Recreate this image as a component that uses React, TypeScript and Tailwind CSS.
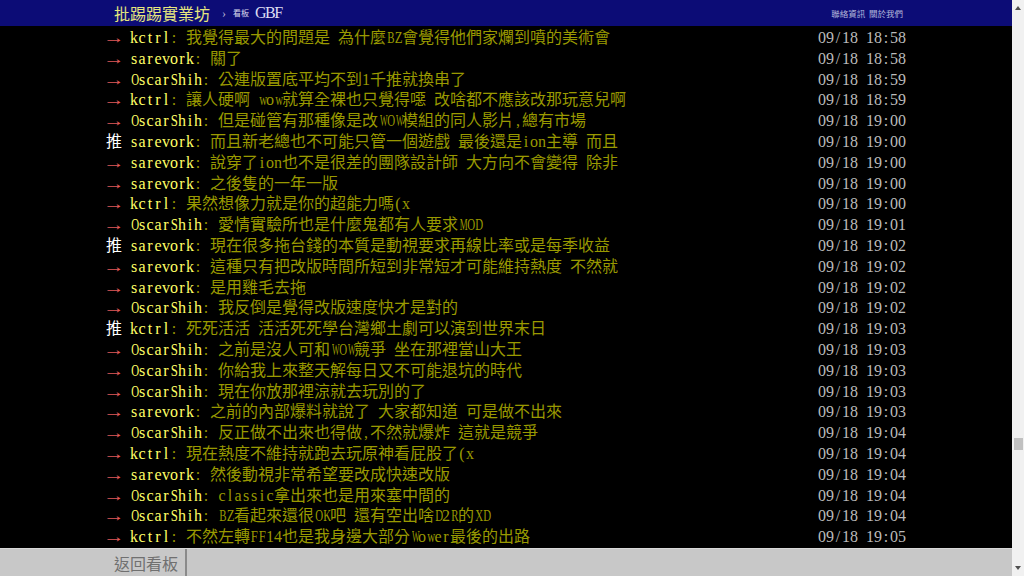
import React from 'react';

type Push = { tag: '推' | '→'; user: string; text: string; time: string };

const pushes: Push[] = [
    { tag: '→', user: 'kctrl', text: '我覺得最大的問題是 為什麼BZ會覺得他們家爛到噴的美術會', time: '09/18 18:58' },
    { tag: '→', user: 'sarevork', text: '關了', time: '09/18 18:58' },
    { tag: '→', user: 'OscarShih', text: '公連版置底平均不到1千推就換串了', time: '09/18 18:59' },
    { tag: '→', user: 'kctrl', text: '讓人硬啊 wow就算全裸也只覺得噁 改啥都不應該改那玩意兒啊', time: '09/18 18:59' },
    { tag: '→', user: 'OscarShih', text: '但是碰管有那種像是改WOW模組的同人影片,總有市場', time: '09/18 19:00' },
    { tag: '推', user: 'sarevork', text: '而且新老總也不可能只管一個遊戲 最後還是ion主導 而且', time: '09/18 19:00' },
    { tag: '→', user: 'sarevork', text: '說穿了ion也不是很差的團隊設計師 大方向不會變得 除非', time: '09/18 19:00' },
    { tag: '→', user: 'sarevork', text: '之後隻的一年一版', time: '09/18 19:00' },
    { tag: '→', user: 'kctrl', text: '果然想像力就是你的超能力嗎(x', time: '09/18 19:00' },
    { tag: '→', user: 'OscarShih', text: '愛情實驗所也是什麼鬼都有人要求MOD', time: '09/18 19:01' },
    { tag: '推', user: 'sarevork', text: '現在很多拖台錢的本質是動視要求再線比率或是每季收益', time: '09/18 19:02' },
    { tag: '→', user: 'sarevork', text: '這種只有把改版時間所短到非常短才可能維持熱度 不然就', time: '09/18 19:02' },
    { tag: '→', user: 'sarevork', text: '是用雞毛去拖', time: '09/18 19:02' },
    { tag: '→', user: 'OscarShih', text: '我反倒是覺得改版速度快才是對的', time: '09/18 19:02' },
    { tag: '推', user: 'kctrl', text: '死死活活 活活死死學台灣鄉土劇可以演到世界末日', time: '09/18 19:03' },
    { tag: '→', user: 'OscarShih', text: '之前是沒人可和WOW競爭 坐在那裡當山大王', time: '09/18 19:03' },
    { tag: '→', user: 'OscarShih', text: '你給我上來整天解每日又不可能退坑的時代', time: '09/18 19:03' },
    { tag: '→', user: 'OscarShih', text: '現在你放那裡涼就去玩別的了', time: '09/18 19:03' },
    { tag: '→', user: 'sarevork', text: '之前的內部爆料就說了 大家都知道 可是做不出來', time: '09/18 19:03' },
    { tag: '→', user: 'OscarShih', text: '反正做不出來也得做,不然就爆炸 這就是競爭', time: '09/18 19:04' },
    { tag: '→', user: 'kctrl', text: '現在熱度不維持就跑去玩原神看屁股了(x', time: '09/18 19:04' },
    { tag: '→', user: 'sarevork', text: '然後動視非常希望要改成快速改版', time: '09/18 19:04' },
    { tag: '→', user: 'OscarShih', text: 'classic拿出來也是用來塞中間的', time: '09/18 19:04' },
    { tag: '→', user: 'OscarShih', text: 'BZ看起來還很OK吧 還有空出啥D2R的XD', time: '09/18 19:04' },
    { tag: '→', user: 'kctrl', text: '不然左轉FF14也是我身邊大部分Wower最後的出路', time: '09/18 19:05' },
];

// half width latin squeezed into 8px cells, like the bbs terminal font
const squeeze = (ch: string) => {
    if (ch === 'W') return 'scale-x-[0.5]';
    if (ch === 'M') return 'scale-x-[0.55]';
    if (ch === 'm') return 'scale-x-[0.6]';
    if ('ABCDGHKNOQRUVXYw'.includes(ch)) return 'scale-x-[0.68]';
    if ('EFLPSTZ'.includes(ch)) return 'scale-x-[0.8]';
    return '';
};

const Term = ({ text }: { text: string }) => {
    const out: React.ReactNode[] = [];
    let buf = '';
    Array.from(text).forEach((ch, i) => {
        if (ch.charCodeAt(0) < 128) {
            if (buf) { out.push(<span key={'c' + i}>{buf}</span>); buf = ''; }
            out.push(<span key={i} className={`inline-block w-[8px] text-center ${squeeze(ch)}`}>{ch}</span>);
        } else {
            buf += ch;
        }
    });
    if (buf) out.push(<span key="end">{buf}</span>);
    return <>{out}</>;
};

const PushRow = ({ p }: { p: Push }) => (
    <div className="flex h-[20.8px] leading-[20.8px] whitespace-pre">
        <span className="w-[24px] shrink-0">
            {p.tag === '推'
                ? <span className="text-white">推</span>
                : <span className="inline-block w-[16px] scale-x-[1.35] text-center text-[#e05a5a]">→</span>}
        </span>
        <span className="text-[#ffff66]"><Term text={p.user} /></span>
        <span className="text-[#999900]"><Term text={': ' + p.text} /></span>
        <span className="ml-auto text-[#bbbbbb]"><Term text={p.time} /></span>
    </div>
);

export default function App() {
    return (
        <div className="flex h-[576px] w-[1024px] overflow-hidden bg-black font-['Liberation_Serif','Noto_Sans_CJK_TC',serif]">
            <div className="flex w-[1012px] flex-col">
                {/* top bar */}
                <div className="h-[26px] shrink-0 bg-[#0c0c76]">
                    <div className="mx-auto flex h-full w-[800px] items-center pl-2 pr-[3px]">
                        <span className="text-[16px] text-[#e6e67e] font-['Noto_Sans_CJK_TC',sans-serif]">批踢踢實業坊</span>
                        <span className="ml-[12px] text-[12px] text-[#b8b8d8]">›</span>
                        <span className="ml-[7px] text-[8px] text-[#d8d8ea] font-['Noto_Sans_CJK_TC',sans-serif]">看板</span>
                        <span className="ml-[6px] text-[16px] tracking-[-1.5px] text-[#dcdcf2]">GBF</span>
                        <span className="ml-auto text-[8.5px] text-[#b4b8dc] font-['Noto_Sans_CJK_TC',sans-serif] whitespace-pre">聯絡資訊  關於我們</span>
                    </div>
                </div>

                {/* pushes */}
                <div className="flex-1 overflow-hidden pt-[2px]">
                    <div className="mx-auto w-[800px] text-[16px]">
                        {pushes.map((p, i) => <PushRow key={i} p={p} />)}
                    </div>
                </div>

                {/* bottom nav */}
                <div className="h-[28px] shrink-0 border-t border-[#d8d8d8] bg-[#c8c8c8]">
                    <div className="mx-auto flex h-full w-[800px]">
                        <div className="flex items-center border-r-2 border-[#8a8a8a] pl-2 pr-[7px] text-[16px] text-[#707070] font-['Noto_Sans_CJK_TC',sans-serif]">返回看板</div>
                    </div>
                </div>
            </div>

            {/* scrollbar */}
            <div className="flex w-[12px] flex-col items-center bg-[#f1f1f1]">
                <svg width="8" height="12" viewBox="0 0 8 12" className="mt-[2px]">
                    <polygon points="4,4 7,8 1,8" fill="#505050" />
                </svg>
                <div className="mt-[424px] h-[12px] w-[9px] bg-[#c1c1c1]" />
                <div className="flex-1" />
                <svg width="8" height="12" viewBox="0 0 8 12" className="mb-[2px]">
                    <polygon points="1,4 7,4 4,8" fill="#505050" />
                </svg>
            </div>
        </div>
    );
}
